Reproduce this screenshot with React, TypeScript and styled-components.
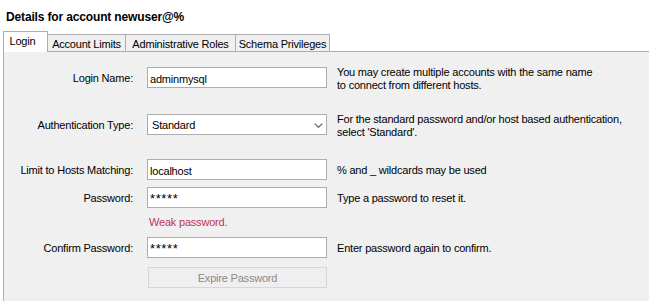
import React from "react";
import styled, { createGlobalStyle } from "styled-components";

const GlobalStyle = createGlobalStyle`
  html, body {
    margin: 0;
    padding: 0;
    background: #ffffff;
  }
  body {
    font-family: "Liberation Sans", Arial, sans-serif;
    font-size: 11px;
    letter-spacing: -0.2px;
    color: #000000;
  }
  * { box-sizing: border-box; }
`;

const Page = styled.div`
  width: 649px;
  height: 301px;
  overflow: hidden;
  display: flex;
  flex-direction: column;
  background: #ffffff;
`;

const Title = styled.div`
  font-weight: bold;
  font-size: 12px;
  line-height: 14px;
  letter-spacing: -0.15px;
  padding: 10px 0 0 6px;
`;

const TabBar = styled.div`
  display: flex;
  align-items: flex-end;
  height: 20px;
  margin: 7px 0 0 3px;
  position: relative;
  z-index: 1;
`;

const Tab = styled.div<{ $active?: boolean; $width: number }>`
  width: ${(p) => p.$width}px;
  height: ${(p) => (p.$active ? 21 : 17)}px;
  margin-bottom: ${(p) => (p.$active ? -1 : 0)}px;
  border: 1px solid #adadad;
  border-bottom: none;
  background: ${(p) => (p.$active ? "#ffffff" : "#f0f0f0")};
  line-height: 16px;
  padding: 1px ${(p) => (p.$active ? 6 : 0)}px 0 0;
  text-align: center;
  white-space: nowrap;
  & + & {
    margin-left: -1px;
  }
`;

const Panel = styled.div`
  flex: 1;
  margin-left: 3px;
  border-top: 1px solid #adadad;
  border-left: 1px solid #adadad;
  background: #f0f0f0;
  padding-top: 15px;
`;

const Row = styled.div<{ $top: number }>`
  display: flex;
  align-items: flex-start;
  margin-top: ${(p) => p.$top}px;
`;

const Label = styled.div`
  width: 129px;
  flex-shrink: 0;
  margin-right: 14px;
  text-align: right;
  line-height: 21px;
  padding-top: 1px;
  white-space: nowrap;
`;

const Field = styled.input<{ $secret?: boolean }>`
  width: 180px;
  height: 21px;
  flex-shrink: 0;
  border: 1px solid #adadad;
  background: #ffffff;
  padding: 2px 2px 0 2px;
  margin: 0;
  font-family: inherit;
  font-size: ${(p) => (p.$secret ? "13px" : "11px")};
  letter-spacing: ${(p) => (p.$secret ? "0.6px" : "-0.2px")};
  color: #000000;
  outline: none;
`;

const SelectBox = styled.div`
  width: 180px;
  height: 21px;
  flex-shrink: 0;
  border: 1px solid #adadad;
  background: #ffffff;
  display: flex;
  align-items: center;
  justify-content: space-between;
  padding: 1px 3px 0 4px;
`;

const Chevron = styled.svg`
  width: 9px;
  height: 5px;
`;

const Help = styled.div<{ $lines: number }>`
  margin-left: 10px;
  line-height: ${(p) => (p.$lines > 1 ? 13 : 21)}px;
  padding-top: ${(p) => (p.$lines > 1 ? 0 : 1)}px;
  margin-top: ${(p) => (p.$lines > 1 ? -1 : 0)}px;
  white-space: nowrap;
`;

const Weak = styled.div`
  padding-left: 2px;
  line-height: 13px;
  color: #bd3458;
`;

const Spacer = styled.div`
  width: 129px;
  margin-right: 14px;
  flex-shrink: 0;
`;

const Button = styled.button`
  width: 179px;
  height: 21px;
  margin: 0 0 0 1px;
  padding: 0;
  border: 1px solid #d6d6d6;
  background: #efefef;
  color: #8a8a8a;
  font-family: inherit;
  font-size: 11px;
  letter-spacing: -0.2px;
  text-align: center;
`;

const tabs = [
  { label: "Login", width: 45, active: true },
  { label: "Account Limits", width: 79 },
  { label: "Administrative Roles", width: 111 },
  { label: "Schema Privileges", width: 95 },
];

export default function App() {
  return (
    <>
      <GlobalStyle />
      <Page>
        <Title>Details for account newuser@%</Title>
        <TabBar>
          {tabs.map((t) => (
            <Tab key={t.label} $active={t.active} $width={t.width}>
              {t.label}
            </Tab>
          ))}
        </TabBar>
        <Panel>
          <Row $top={0}>
            <Label>Login Name:</Label>
            <Field readOnly value="adminmysql" />
            <Help $lines={2}>
              You may create multiple accounts with the same name
              <br />
              to connect from different hosts.
            </Help>
          </Row>
          <Row $top={22}>
            <Label>Authentication Type:</Label>
            <SelectBox>
              <span>Standard</span>
              <Chevron viewBox="0 0 9 5">
                <polyline
                  points="0.6,0.6 4.5,4.3 8.4,0.6"
                  fill="none"
                  stroke="#6a6a6a"
                  strokeWidth="1.3"
                />
              </Chevron>
            </SelectBox>
            <Help $lines={2}>
              For the standard password and/or host based authentication,
              <br />
              select 'Standard'.
            </Help>
          </Row>
          <Row $top={20}>
            <Label>Limit to Hosts Matching:</Label>
            <Field readOnly value="localhost" />
            <Help $lines={1}>% and _ wildcards may be used</Help>
          </Row>
          <Row $top={6}>
            <Label>Password:</Label>
            <Field readOnly $secret value="*****" />
            <Help $lines={1}>Type a password to reset it.</Help>
          </Row>
          <Row $top={7}>
            <Spacer />
            <Weak>Weak password.</Weak>
          </Row>
          <Row $top={8}>
            <Label>Confirm Password:</Label>
            <Field readOnly $secret value="*****" />
            <Help $lines={1}>Enter password again to confirm.</Help>
          </Row>
          <Row $top={8}>
            <Spacer />
            <Button disabled>Expire Password</Button>
          </Row>
        </Panel>
      </Page>
    </>
  );
}
